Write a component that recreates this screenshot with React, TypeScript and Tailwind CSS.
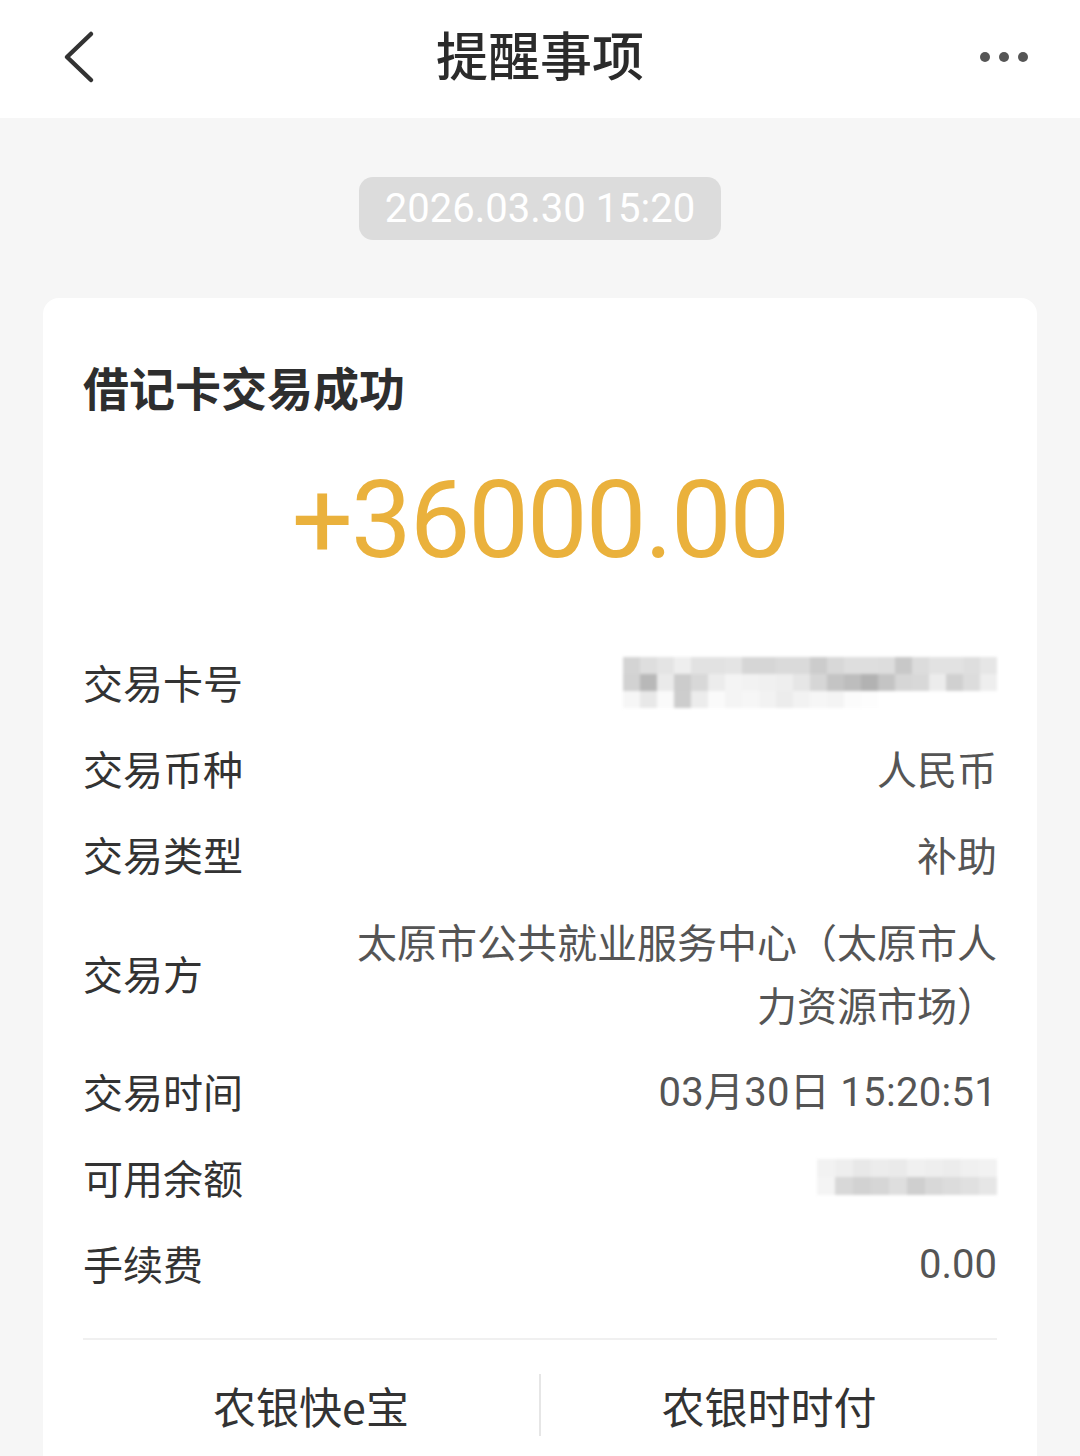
import React from "react";

const cjk = { fontFamily: '"Noto Sans CJK SC", "Noto Sans", sans-serif' };
const num = { fontFamily: 'Roboto, "Noto Sans CJK SC", sans-serif' };

const cardShades: string[][] = [
  ["#d4d4d4", "#dedede", "#e4e4e4", "#eeeeee", "#e2e2e2", "#e2e2e2", "#e4e4e4", "#d6d6d6", "#d6d6d6", "#dadada", "#dadada", "#cccccc", "#d8d8d8", "#dedede", "#dedede", "#dddddd", "#c8c8c8", "#dcdcdc", "#e2e2e2", "#e2e2e2", "#dedede", "#e6e6e6"],
  ["#d2d2d2", "#b8b8b8", "#eaeaea", "#cccccc", "#d8d8d8", "#ececec", "#f4f4f4", "#f2f2f2", "#f0f0f0", "#eeeeee", "#e6e6e6", "#d6d6d6", "#c4c4c4", "#bdbdbd", "#b2b2b2", "#c4c4c4", "#d6d6d6", "#d8d8d8", "#ececec", "#d0d0d0", "#dcdcdc", "#eeeeee"],
  ["#f6f6f6", "#e8e8e8", "#fafafa", "#cdcdcd", "#ececec", "#fafafa", "#f4f4f4", "#f6f6f6", "#f2f2f2", "#ececec", "#f2f2f2", "#f6f6f6", "#f4f4f4", "#fbfbfb", "#fdfdfd", "#ffffff", "#ffffff", "#ffffff", "#ffffff", "#ffffff", "#ffffff", "#ffffff"],
];

const balShades: string[][] = [
  ["#f2f2f2", "#eeeeee", "#e8e8e8", "#ececec", "#eaeaea", "#f0f0f0", "#eeeeee", "#ececec", "#f0f0f0", "#f2f2f2"],
  ["#f4f4f4", "#d8d8d8", "#d2d2d2", "#d6d6d6", "#dedede", "#cfcfcf", "#d8d8d8", "#dcdcdc", "#e0e0e0", "#e6e6e6"],
];

function Mosaic({ shades, cell }: { shades: string[][]; cell: number }) {
  return (
    <div className="flex flex-col blur-[1.5px]">
      {shades.map((row, i) => (
        <div key={i} className="flex">
          {row.map((c, j) => (
            <div key={j} style={{ background: c, width: cell, height: cell }} />
          ))}
        </div>
      ))}
    </div>
  );
}

function Row({ label, children }: { label: string; children: React.ReactNode }) {
  return (
    <div className="flex h-[86px] items-center justify-between">
      <span className="text-[40px] leading-none text-[#333333]" style={cjk}>
        {label}
      </span>
      <div className="text-[40px] leading-none text-[#555555]" style={cjk}>
        {children}
      </div>
    </div>
  );
}

export default function App() {
  return (
    <div className="w-[1080px] h-[1456px] overflow-hidden bg-[#f6f6f6]">
      {/* Header */}
      <div className="relative flex h-[118px] items-start justify-center bg-white pt-[28px]">
        <svg className="absolute left-[62px] top-[30px]" width="34" height="54" viewBox="0 0 34 54">
          <path d="M29 4 L5 27 L29 50" fill="none" stroke="#333333" strokeWidth="4.5" strokeLinecap="round" strokeLinejoin="round" />
        </svg>
        <span className="text-[52px] font-medium leading-none text-[#2b2b2b]" style={cjk}>
          提醒事项
        </span>
        <div className="absolute right-[52px] top-[52px] flex gap-[9px]">
          <div className="h-[10px] w-[10px] rounded-full bg-[#555555]" />
          <div className="h-[10px] w-[10px] rounded-full bg-[#555555]" />
          <div className="h-[10px] w-[10px] rounded-full bg-[#555555]" />
        </div>
      </div>

      {/* Date pill */}
      <div className="flex justify-center pt-[59px]">
        <div className="flex h-[63px] w-[362px] items-center justify-center rounded-[14px] bg-[#dcdcdc]">
          <span className="text-[40px] leading-none text-white" style={num}>
            2026.03.30 15:20
          </span>
        </div>
      </div>

      {/* Card */}
      <div className="mx-[43px] mt-[58px] rounded-[16px] bg-white px-[40px] pt-[56px] pb-[40px]">
        <div className="h-[64px] text-[46px] font-bold leading-[64px] text-[#2e2e2e]" style={cjk}>
          借记卡交易成功
        </div>
        <div className="mt-[47px] flex h-[110px] items-center justify-center">
          <span className="text-[108px] leading-none tracking-[-2px] text-[#eab13c]" style={num}>
            +36000.00
          </span>
        </div>
        <div className="mt-[64px]">
          <Row label="交易卡号">
            <div className="flex justify-end">
              <Mosaic shades={cardShades} cell={17} />
            </div>
          </Row>
          <Row label="交易币种">人民币</Row>
          <Row label="交易类型">补助</Row>
          <div className="flex h-[151px] items-center justify-between">
            <span className="text-[40px] leading-none text-[#333333]" style={cjk}>
              交易方
            </span>
            <div className="w-[660px] text-right text-[40px] leading-[63px] text-[#555555]" style={cjk}>
              太原市公共就业服务中心（太原市人
              <br />
              力资源市场）
            </div>
          </div>
          <Row label="交易时间">
            <span style={num} className="text-[40px] tracking-[0.3px]">
              03月30日 15:20:51
            </span>
          </Row>
          <Row label="可用余额">
            <div className="flex justify-end">
              <Mosaic shades={balShades} cell={18} />
            </div>
          </Row>
          <Row label="手续费">
            <span style={num}>0.00</span>
          </Row>
        </div>
        <div className="mt-[32px] h-[2px] bg-[#f0f0f0]" />
        <div className="flex h-[130px] items-center">
          <div className="flex flex-1 justify-center text-[43px] leading-none text-[#333333]" style={cjk}>
            农银快e宝
          </div>
          <div className="h-[62px] w-[2px] bg-[#e6e6e6]" />
          <div className="flex flex-1 justify-center text-[43px] leading-none text-[#333333]" style={cjk}>
            农银时时付
          </div>
        </div>
      </div>
    </div>
  );
}
